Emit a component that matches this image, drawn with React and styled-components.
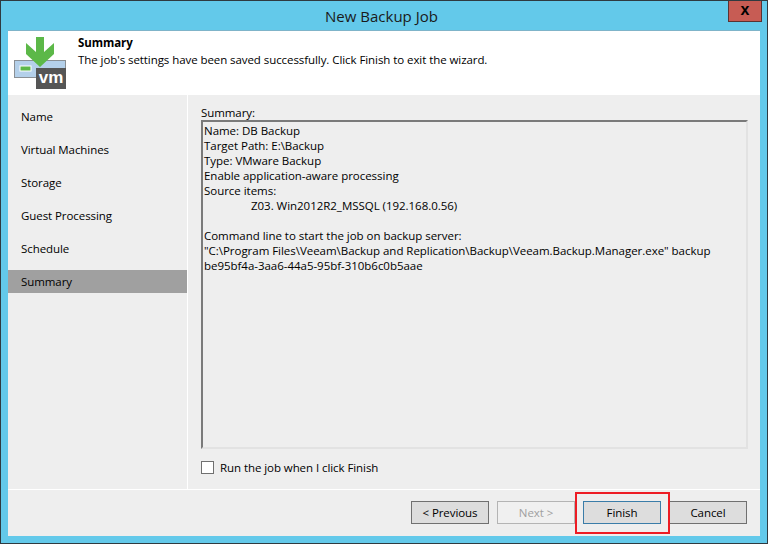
import React from 'react';
import styled, { createGlobalStyle } from 'styled-components';

const GlobalStyle = createGlobalStyle`
  html, body {
    margin: 0;
    padding: 0;
    background: #63c9ea;
  }
  body {
    font-family: "Open Sans", "Noto Sans", sans-serif;
    font-size: 11.5px;
    letter-spacing: -0.07px;
    color: #000;
  }
`;

const steps = ['Name', 'Virtual Machines', 'Storage', 'Guest Processing', 'Schedule', 'Summary'];

const summaryText = `Name: DB Backup
Target Path: E:\\Backup
Type: VMware Backup
Enable application-aware processing
Source items:
\t\tZ03. Win2012R2_MSSQL (192.168.0.56)

Command line to start the job on backup server:
"C:\\Program Files\\Veeam\\Backup and Replication\\Backup\\Veeam.Backup.Manager.exe" backup
be95bf4a-3aa6-44a5-95bf-310b6c0b5aae`;

const WizardIcon = () => (
  <svg width="52" height="52" viewBox="0 0 52 52">
    <rect x="0.5" y="23.5" width="51" height="17" fill="#b4d0ea" stroke="#8a8f94" />
    <rect x="6" y="29" width="11" height="5" fill="#5cb848" stroke="#fff" strokeWidth="1" />
    <path d="M22 0h8v15l10-9v11L26 30 12 17V6l10 9z" fill="#5cb848" />
    <rect x="22" y="31" width="30" height="21" fill="#555" />
    <text x="37" y="46" textAnchor="middle" fontFamily="Liberation Sans, sans-serif" fontSize="17" fontWeight="700" fill="#fff">vm</text>
  </svg>
);

const App = () => (
  <Window>
    <GlobalStyle />
    <TitleBar>
      <Title>New Backup Job</Title>
      <CloseButton>x</CloseButton>
    </TitleBar>
    <Body>
      <Header>
        <IconSlot><WizardIcon /></IconSlot>
        <HeaderText>
          <HeaderTitle>Summary</HeaderTitle>
          <HeaderDesc>The job's settings have been saved successfully. Click Finish to exit the wizard.</HeaderDesc>
        </HeaderText>
      </Header>
      <Main>
        <Sidebar>
          {steps.map((step) => (
            <Step key={step} $active={step === 'Summary'}>{step}</Step>
          ))}
        </Sidebar>
        <Content>
          <FieldLabel>Summary:</FieldLabel>
          <SummaryBox>{summaryText}</SummaryBox>
          <CheckRow>
            <CheckBox />
            <span>Run the job when I click Finish</span>
          </CheckRow>
        </Content>
      </Main>
      <Footer>
        <Button>&lt; Previous</Button>
        <Button $disabled>Next &gt;</Button>
        <FinishSlot>
          <Button $primary>Finish</Button>
        </FinishSlot>
        <Button>Cancel</Button>
      </Footer>
    </Body>
  </Window>
);

export default App;

const Window = styled.div`
  box-sizing: border-box;
  width: 768px;
  height: 544px;
  border: 1px solid #2f3a40;
  background: #63c9ea;
  display: flex;
  flex-direction: column;
  overflow: hidden;
`;

const TitleBar = styled.div`
  height: 29px;
  flex: none;
  position: relative;
  display: flex;
  justify-content: center;
  align-items: center;
`;

const Title = styled.div`
  font-size: 15px;
  letter-spacing: 0;
  color: #1a1a1a;
  padding-right: 5px;
  padding-top: 1px;
`;

const CloseButton = styled.div`
  position: absolute;
  top: 0;
  right: 5px;
  box-sizing: border-box;
  width: 34px;
  height: 21px;
  background: #c75c54;
  border: 1px solid #5a3232;
  border-top: none;
  color: #000;
  font-family: "Liberation Sans", sans-serif;
  font-weight: 700;
  font-size: 16px;
  line-height: 17px;
  text-align: center;
`;

const Body = styled.div`
  flex: 1;
  margin: 0 7px 7px;
  background: #eeeeee;
  display: flex;
  flex-direction: column;
  min-height: 0;
  border-top: 1px solid #7fb4c9;
`;

const Header = styled.div`
  height: 64px;
  flex: none;
  background: #fff;
  display: flex;
`;

const IconSlot = styled.div`
  width: 70px;
  flex: none;
  padding: 6px 0 0 6px;
  box-sizing: border-box;
`;

const HeaderText = styled.div`
  padding-top: 3px;
  line-height: 17px;
`;

const HeaderTitle = styled.div`
  font-weight: 700;
`;

const HeaderDesc = styled.div``;

const Main = styled.div`
  flex: 1;
  display: flex;
  min-height: 0;
  border-bottom: 1px solid #fff;
`;

const Sidebar = styled.div`
  width: 179px;
  flex: none;
  border-right: 1px solid #fff;
  padding-top: 10px;
  display: flex;
  flex-direction: column;
  gap: 10px;
`;

const Step = styled.div`
  height: 23px;
  line-height: 23px;
  padding-left: 13px;
  background: ${(p) => (p.$active ? '#a0a0a0' : 'transparent')};
`;

const Content = styled.div`
  flex: 1;
  display: flex;
  flex-direction: column;
  padding: 10px 12px 0 13px;
  min-width: 0;
`;

const FieldLabel = styled.div`
  line-height: 15px;
  height: 15px;
`;

const SummaryBox = styled.div`
  box-sizing: border-box;
  height: 329px;
  border: 2px solid #fff;
  border-top-color: #7a7a7a;
  border-left-color: #7a7a7a;
  border-right-color: #e2e2e2;
  border-bottom-color: #e2e2e2;
  padding: 1px 0 0 1px;
  line-height: 15px;
  letter-spacing: -0.03px;
  white-space: pre-wrap;
  tab-size: 23.5px;
`;

const CheckRow = styled.div`
  display: flex;
  align-items: center;
  gap: 6px;
  margin-top: 11px;
`;

const CheckBox = styled.div`
  box-sizing: border-box;
  width: 13px;
  height: 13px;
  background: #fff;
  border: 1px solid #707070;
`;

const Footer = styled.div`
  height: 46px;
  flex: none;
  display: flex;
  align-items: flex-start;
  justify-content: flex-end;
  gap: 8px;
  padding: 11px 13px 0 0;
  box-sizing: border-box;
`;

const Button = styled.div`
  box-sizing: border-box;
  width: 78px;
  height: 23px;
  line-height: 21px;
  text-align: center;
  border: 1px solid ${(p) => (p.$disabled ? '#b4b4b4' : p.$primary ? '#3a7ca8' : '#707070')};
  background: ${(p) => (p.$disabled ? '#f0f0f0' : '#dddddd')};
  color: ${(p) => (p.$disabled ? '#a0a0a0' : '#000')};
`;

const FinishSlot = styled.div`
  position: relative;
  z-index: 1;
  &::after {
    content: '';
    position: absolute;
    left: -8px;
    right: -9px;
    top: -9px;
    bottom: -10px;
    border: 2px solid #ed1c24;
    pointer-events: none;
  }
`;
